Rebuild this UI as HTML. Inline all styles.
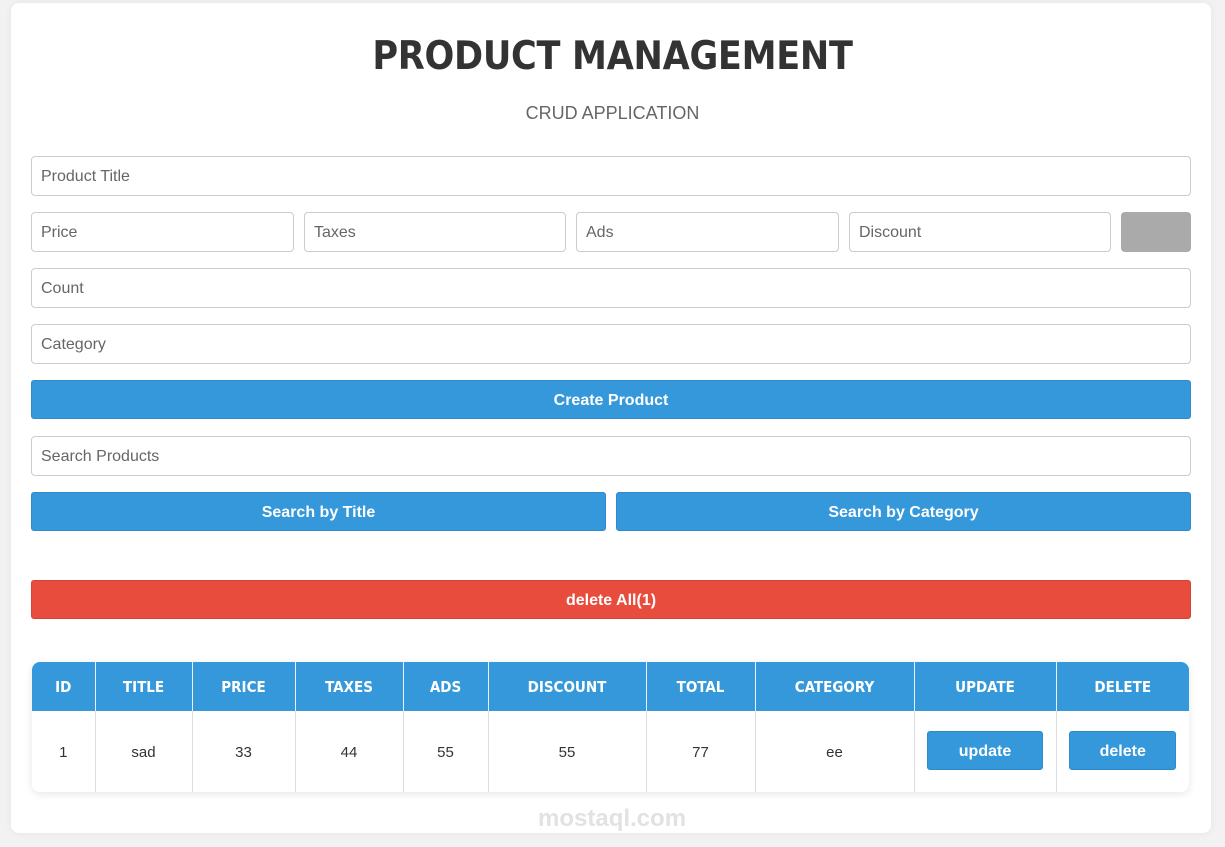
<!DOCTYPE html>
<html><head><style>
*{box-sizing:border-box;margin:0;padding:0}
body{width:1225px;height:847px;background:#f2f2f2;font-family:"Liberation Sans",Arial,sans-serif;position:relative;overflow:hidden}
.card{position:absolute;left:11px;top:3px;width:1200px;height:830px;background:#fff;border-radius:8px;box-shadow:0 0 8px rgba(0,0,0,.06)}
h1{position:absolute;left:0;width:1225px;top:34px;text-align:center;font-size:39px;font-weight:bold;color:#333;font-family:"DejaVu Sans Condensed","DejaVu Sans",sans-serif;letter-spacing:-0.3px}
.sub{position:absolute;left:0;width:1225px;top:103px;text-align:center;font-size:18px;color:#666;font-family:"Liberation Sans",sans-serif}
.in{position:absolute;height:40px;border:1px solid #ccc;border-radius:4px;padding-left:9px;line-height:39px;font-size:16px;color:#666;background:#fff}
.btn{position:absolute;height:39px;border-radius:3px;background:#3498db;color:#fff;font-weight:bold;font-size:16px;text-align:center;line-height:39px;border:1px solid #2f8acb}
table{position:absolute;left:32px;top:662px;width:1157px;border-collapse:collapse;font-family:"DejaVu Sans Condensed","DejaVu Sans",sans-serif;box-shadow:0 2px 8px rgba(0,0,0,.1);border-radius:8px;overflow:hidden}
th{background:#3498db;color:#fff;height:49px;font-size:15px;border-right:1px solid #e8f0f8;font-weight:bold}
td{height:81px;text-align:center;font-size:15px;color:#333;border-right:1px solid #ddd;font-family:"Liberation Sans",sans-serif;padding-top:2px}
th:last-child,td:last-child{border-right:none}
.tb{display:inline-block;background:#3498db;color:#fff;font-family:"Liberation Sans",sans-serif;font-weight:bold;font-size:16px;height:39px;line-height:39px;border-radius:3px;border:1px solid #2f8acb;position:relative;top:-2px}
.wm{position:absolute;left:538px;top:805px;font-size:24px;color:#e2e2e2;font-weight:bold}
</style></head><body>
<div class="card"></div>
<h1>PRODUCT MANAGEMENT</h1>
<div class="sub">CRUD APPLICATION</div>
<div class="in" style="left:31px;top:156px;width:1160px">Product Title</div>
<div class="in" style="left:31px;top:212px;width:263px">Price</div>
<div class="in" style="left:304px;top:212px;width:262px">Taxes</div>
<div class="in" style="left:576px;top:212px;width:263px">Ads</div>
<div class="in" style="left:849px;top:212px;width:262px">Discount</div>
<div style="position:absolute;left:1121px;top:212px;width:70px;height:40px;background:#aaa;border-radius:4px"></div>
<div class="in" style="left:31px;top:268px;width:1160px">Count</div>
<div class="in" style="left:31px;top:324px;width:1160px">Category</div>
<div class="btn" style="left:31px;top:380px;width:1160px">Create Product</div>
<div class="in" style="left:31px;top:436px;width:1160px">Search Products</div>
<div class="btn" style="left:31px;top:492px;width:575px">Search by Title</div>
<div class="btn" style="left:616px;top:492px;width:575px">Search by Category</div>
<div class="btn" style="left:31px;top:580px;width:1160px;background:#e74c3c;border-color:#d44333">delete All(1)</div>
<table>
<tr><th style="width:63px">ID</th><th style="width:97px">TITLE</th><th style="width:103px">PRICE</th><th style="width:108px">TAXES</th><th style="width:85px">ADS</th><th style="width:158px">DISCOUNT</th><th style="width:109px">TOTAL</th><th style="width:159px">CATEGORY</th><th style="width:142px">UPDATE</th><th>DELETE</th></tr>
<tr><td>1</td><td>sad</td><td>33</td><td>44</td><td>55</td><td>55</td><td>77</td><td>ee</td><td><span class="tb" style="width:116px">update</span></td><td><span class="tb" style="width:107px">delete</span></td></tr>
</table>
<div class="wm">mostaql.com</div>
</body></html>
